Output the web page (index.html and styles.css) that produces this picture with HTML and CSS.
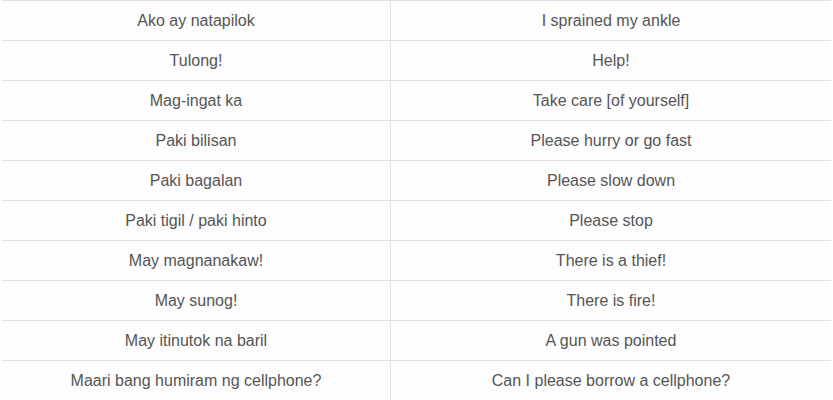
FILE: index.html
```html
<!DOCTYPE html>
<html>
<head>
<meta charset="utf-8">
<link rel="stylesheet" href="styles.css">
</head>
<body>
<table class="phrases">
<tbody>
<tr><td>Ako ay natapilok</td><td>I sprained my ankle</td></tr>
<tr><td>Tulong!</td><td>Help!</td></tr>
<tr><td>Mag-ingat ka</td><td>Take care [of yourself]</td></tr>
<tr><td>Paki bilisan</td><td>Please hurry or go fast</td></tr>
<tr><td>Paki bagalan</td><td>Please slow down</td></tr>
<tr><td>Paki tigil / paki hinto</td><td>Please stop</td></tr>
<tr><td>May magnanakaw!</td><td>There is a thief!</td></tr>
<tr><td>May sunog!</td><td>There is fire!</td></tr>
<tr><td>May itinutok na baril</td><td>A gun was pointed</td></tr>
<tr><td>Maari bang humiram ng cellphone?</td><td>Can I please borrow a cellphone?</td></tr>
</tbody>
</table>
</body>
</html>
```
FILE: styles.css
```css
html, body {
  margin: 0;
  padding: 0;
  background: #ffffff;
}
body {
  padding: 0 2px 0 2px;
}
.phrases {
  width: 829px;
  border-collapse: collapse;
  font-family: "Liberation Sans", Arial, sans-serif;
  font-size: 16px;
  color: #555555;
  background: #fdfdfd;
}
.phrases td {
  height: 39px;
  padding: 0;
  text-align: center;
  vertical-align: middle;
  border-top: 1px solid #e2e2e2;
  border-bottom: 1px solid #e2e2e2;
}
.phrases td:first-child {
  width: 388px;
  border-right: 1px solid #e2e2e2;
}
```
